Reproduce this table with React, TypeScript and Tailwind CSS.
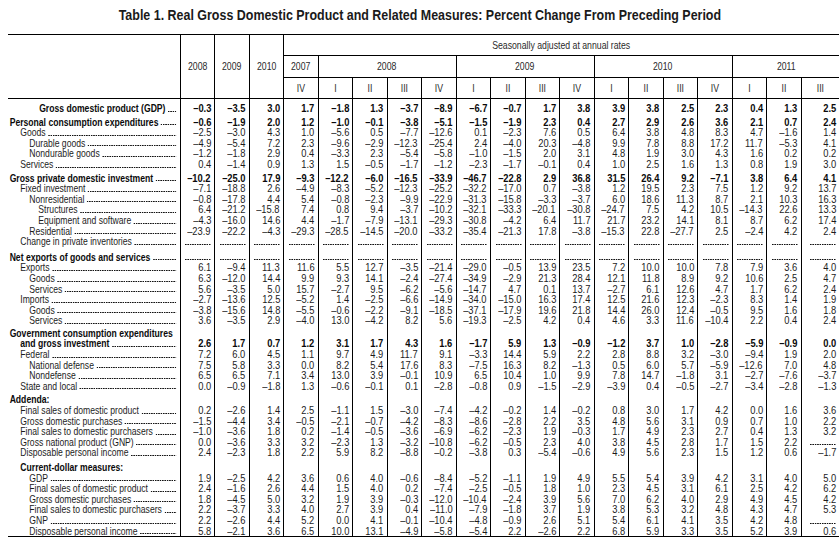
import React from "react";

type Row = { l: string; i: number; b?: boolean; gap?: number; noDots?: boolean; v?: string };

const D = "d d d d d d d d d d d d d d d d d d d";

const rows: Row[] = [
  { l: "Gross domestic product (GDP)", i: 4, b: true, gap: 4, v: "-0.3 -3.5 3.0 1.7 -1.8 1.3 -3.7 -8.9 -6.7 -0.7 1.7 3.8 3.9 3.8 2.5 2.3 0.4 1.3 2.5" },
  { l: "Personal consumption expenditures", i: 0, b: true, gap: 3, v: "-0.6 -1.9 2.0 1.2 -1.0 -0.1 -3.8 -5.1 -1.5 -1.9 2.3 0.4 2.7 2.9 2.6 3.6 2.1 0.7 2.4" },
  { l: "Goods", i: 1, v: "-2.5 -3.0 4.3 1.0 -5.6 0.5 -7.7 -12.6 0.1 -2.3 7.6 0.5 6.4 3.8 4.8 8.3 4.7 -1.6 1.4" },
  { l: "Durable goods", i: 2, v: "-4.9 -5.4 7.2 2.3 -9.6 -2.9 -12.3 -25.4 2.4 -4.0 20.3 -4.8 9.9 7.8 8.8 17.2 11.7 -5.3 4.1" },
  { l: "Nondurable goods", i: 2, v: "-1.2 -1.8 2.9 0.4 -3.3 2.3 -5.4 -5.8 -1.0 -1.5 2.0 3.1 4.8 1.9 3.0 4.3 1.6 0.2 0.2" },
  { l: "Services", i: 1, v: "0.4 -1.4 0.9 1.3 1.5 -0.5 -1.7 -1.2 -2.3 -1.7 -0.1 0.4 1.0 2.5 1.6 1.3 0.8 1.9 3.0" },
  { l: "Gross private domestic investment", i: 0, b: true, gap: 3, v: "-10.2 -25.0 17.9 -9.3 -12.2 -6.0 -16.5 -33.9 -46.7 -22.8 2.9 36.8 31.5 26.4 9.2 -7.1 3.8 6.4 4.1" },
  { l: "Fixed investment", i: 1, v: "-7.1 -18.8 2.6 -4.9 -8.3 -5.2 -12.3 -25.2 -32.2 -17.0 0.7 -3.8 1.2 19.5 2.3 7.5 1.2 9.2 13.7" },
  { l: "Nonresidential", i: 2, v: "-0.8 -17.8 4.4 5.4 -0.8 -2.3 -9.9 -22.9 -31.3 -15.8 -3.3 -3.7 6.0 18.6 11.3 8.7 2.1 10.3 16.3" },
  { l: "Structures", i: 3, v: "6.4 -21.2 -15.8 7.4 0.8 9.4 -3.7 -10.2 -32.1 -33.3 -20.1 -30.8 -24.7 7.5 4.2 10.5 -14.3 22.6 13.3" },
  { l: "Equipment and software", i: 3, v: "-4.3 -16.0 14.6 4.4 -1.7 -7.9 -13.1 -29.3 -30.8 -4.2 6.4 11.7 21.7 23.2 14.1 8.1 8.7 6.2 17.4" },
  { l: "Residential", i: 2, v: "-23.9 -22.2 -4.3 -29.3 -28.5 -14.5 -20.0 -33.2 -35.4 -21.3 17.8 -3.8 -15.3 22.8 -27.7 2.5 -2.4 4.2 2.4" },
  { l: "Change in private inventories", i: 1, v: D },
  { l: "Net exports of goods and services", i: 0, b: true, gap: 5, v: D },
  { l: "Exports", i: 1, v: "6.1 -9.4 11.3 11.6 5.5 12.7 -3.5 -21.4 -29.0 -0.5 13.9 23.5 7.2 10.0 10.0 7.8 7.9 3.6 4.0" },
  { l: "Goods", i: 2, v: "6.3 -12.0 14.4 9.9 9.3 14.1 -2.4 -27.4 -34.9 -2.9 21.3 28.4 12.1 11.8 8.9 9.2 10.6 2.5 4.7" },
  { l: "Services", i: 2, v: "5.6 -3.5 5.0 15.7 -2.7 9.5 -6.2 -5.6 -14.7 4.7 0.1 13.7 -2.7 6.1 12.6 4.7 1.7 6.2 2.4" },
  { l: "Imports", i: 1, v: "-2.7 -13.6 12.5 -5.2 1.4 -2.5 -6.6 -14.9 -34.0 -15.0 16.3 17.4 12.5 21.6 12.3 -2.3 8.3 1.4 1.9" },
  { l: "Goods", i: 2, v: "-3.8 -15.6 14.8 -5.5 -0.6 -2.2 -9.1 -18.5 -37.1 -17.9 19.6 21.8 14.4 26.0 12.4 -0.5 9.5 1.6 1.8" },
  { l: "Services", i: 2, v: "3.6 -3.5 2.9 -4.0 13.0 -4.2 8.2 5.6 -19.3 -2.5 4.2 0.4 4.6 3.3 11.6 -10.4 2.2 0.4 2.4" },
  { l: "Government consumption expenditures", i: 0, b: true, gap: 2, noDots: true },
  { l: "and gross investment", i: 1, b: true, v: "2.6 1.7 0.7 1.2 3.1 1.7 4.3 1.6 -1.7 5.9 1.3 -0.9 -1.2 3.7 1.0 -2.8 -5.9 -0.9 0.0" },
  { l: "Federal", i: 1, v: "7.2 6.0 4.5 1.1 9.7 4.9 11.7 9.1 -3.3 14.4 5.9 2.2 2.8 8.8 3.2 -3.0 -9.4 1.9 2.0" },
  { l: "National defense", i: 2, v: "7.5 5.8 3.3 0.0 8.2 5.4 17.6 8.3 -7.5 16.3 8.2 -1.3 0.5 6.0 5.7 -5.9 -12.6 7.0 4.8" },
  { l: "Nondefense", i: 2, v: "6.5 6.5 7.1 3.4 13.0 3.9 -0.1 10.9 6.5 10.4 1.0 9.9 7.8 14.7 -1.8 3.1 -2.7 -7.6 -3.7" },
  { l: "State and local", i: 1, v: "0.0 -0.9 -1.8 1.3 -0.6 -0.1 0.1 -2.8 -0.8 0.9 -1.5 -2.9 -3.9 0.4 -0.5 -2.7 -3.4 -2.8 -1.3" },
  { l: "Addenda:", i: 0, b: true, gap: 3, noDots: true },
  { l: "Final sales of domestic product", i: 1, v: "0.2 -2.6 1.4 2.5 -1.1 1.5 -3.0 -7.4 -4.2 -0.2 1.4 -0.2 0.8 3.0 1.7 4.2 0.0 1.6 3.6" },
  { l: "Gross domestic purchases", i: 1, v: "-1.5 -4.4 3.4 -0.5 -2.1 -0.7 -4.2 -8.3 -8.6 -2.8 2.2 3.5 4.8 5.6 3.1 0.9 0.7 1.0 2.2" },
  { l: "Final sales to domestic purchasers", i: 1, v: "-1.0 -3.6 1.8 0.2 -1.4 -0.5 -3.6 -6.9 -6.2 -2.3 1.9 -0.3 1.7 4.9 2.3 2.7 0.4 1.3 3.2" },
  { l: "Gross national product (GNP)", i: 1, v: "0.0 -3.6 3.3 3.2 -2.3 1.3 -3.2 -10.8 -6.2 -0.5 2.3 4.0 3.8 4.5 2.8 1.7 1.5 2.2 d" },
  { l: "Disposable personal income", i: 1, v: "2.4 -2.3 1.8 2.2 5.9 8.2 -8.8 -0.2 -3.8 0.3 -5.4 -0.6 4.9 5.6 2.3 1.5 1.2 0.6 -1.7" },
  { l: "Current-dollar measures:", i: 1, b: true, gap: 4, noDots: true },
  { l: "GDP", i: 2, v: "1.9 -2.5 4.2 3.6 0.6 4.0 -0.6 -8.4 -5.2 -1.1 1.9 4.9 5.5 5.4 3.9 4.2 3.1 4.0 5.0" },
  { l: "Final sales of domestic product", i: 2, v: "2.4 -1.6 2.6 4.4 1.5 4.0 0.2 -7.4 -2.5 -0.5 1.8 1.0 2.3 4.5 3.1 6.1 2.5 4.2 6.2" },
  { l: "Gross domestic purchases", i: 2, v: "1.8 -4.5 5.0 3.2 1.9 3.9 -0.3 -12.0 -10.4 -2.4 3.9 5.6 7.0 6.2 4.0 2.9 4.9 4.5 4.2" },
  { l: "Final sales to domestic purchasers", i: 2, v: "2.2 -3.7 3.3 4.0 2.7 3.9 0.4 -11.0 -7.9 -1.8 3.7 1.9 3.8 5.3 3.2 4.8 4.3 4.7 5.3" },
  { l: "GNP", i: 2, v: "2.2 -2.6 4.4 5.2 0.0 4.1 -0.1 -10.4 -4.8 -0.9 2.6 5.1 5.4 6.1 4.1 3.5 4.2 4.8 d" },
  { l: "Disposable personal income", i: 2, v: "5.8 -2.1 3.6 6.5 10.0 13.1 -4.9 -5.8 -5.4 2.2 -2.6 2.2 6.8 5.9 3.3 3.5 5.2 3.9 0.6" },
];

const indent = ["pl-[2px]", "pl-[15px]", "pl-[26px]", "pl-[37px]", "pl-[38px]"];
const gapCls: Record<number, string> = { 0: "", 2: "pt-[2px]", 3: "pt-[3px]", 4: "pt-[4px]", 5: "pt-[5px]" };

const quarters = ["IV", "I", "II", "III", "IV", "I", "II", "III", "IV", "I", "II", "III", "IV", "I", "II", "III"];

function Narrow({ children }: { children: React.ReactNode }) {
  return <span className="inline-block whitespace-nowrap origin-center scale-x-[0.83]">{children}</span>;
}

function Cell({ v, last, bold, gap, bottom }: { v?: string; last: boolean; bold?: boolean; gap: string; bottom: boolean }) {
  return (
    <td
      className={`p-0 pr-[3px] align-bottom text-right ${last ? "" : "border-r border-black"} ${bottom ? "border-b border-black" : ""} ${gap}`}
    >
      {v === "d" ? (
        <div className="ml-auto mb-[2px] h-[1px] w-[26px] bg-[linear-gradient(to_right,#111_1.2px,transparent_1.2px)] bg-[length:2.4px_1px] bg-repeat-x" />
      ) : v ? (
        <span className={`inline-block whitespace-nowrap origin-right scale-x-[0.85] text-[11px] ${bold ? "font-bold text-[#0a0a0a]" : ""}`}>
          {v.replace("-", "\u2013")}
        </span>
      ) : null}
    </td>
  );
}

export default function App() {
  return (
    <div className="w-[839px] h-[549px] overflow-hidden bg-white text-[#1c1c1c] font-['Liberation_Sans','Arial',sans-serif]">
      <div className="h-[34px] pt-[6px] text-center text-[15px] leading-[17px] font-bold text-[#1a1a1a]">
        <span className="inline-block whitespace-nowrap origin-center scale-x-[0.83]">
          Table 1. Real Gross Domestic Product and Related Measures: Percent Change From Preceding Period
        </span>
      </div>
      <table className="ml-2 w-[831px] table-fixed border-collapse text-[10.5px] leading-[10.6px]">
        <colgroup>
          <col className="w-[172px]" />
          {Array.from({ length: 18 }).map((_, k) => (
            <col key={k} className="w-[34.5px]" />
          ))}
          <col className="w-[38px]" />
        </colgroup>
        <thead className="text-[#2a2a2a]">
          <tr className="h-[21px]">
            <th rowSpan={3} className="p-0 border-t border-b border-r border-black"></th>
            {["2008", "2009", "2010"].map((y) => (
              <th key={y} rowSpan={3} className="p-0 border-t border-b border-r border-black font-normal align-middle">
                <Narrow>{y}</Narrow>
              </th>
            ))}
            <th colSpan={16} className="p-0 border-t border-b border-black font-normal align-middle">
              <Narrow>Seasonally adjusted at annual rates</Narrow>
            </th>
          </tr>
          <tr className="h-[22px]">
            <th className="p-0 border-b border-r border-black font-normal">
              <Narrow>2007</Narrow>
            </th>
            <th colSpan={4} className="p-0 border-b border-r border-black font-normal">
              <Narrow>2008</Narrow>
            </th>
            <th colSpan={4} className="p-0 border-b border-r border-black font-normal">
              <Narrow>2009</Narrow>
            </th>
            <th colSpan={4} className="p-0 border-b border-r border-black font-normal">
              <Narrow>2010</Narrow>
            </th>
            <th colSpan={3} className="p-0 border-b border-black font-normal">
              <Narrow>2011</Narrow>
            </th>
          </tr>
          <tr className="h-[21px]">
            {quarters.map((q, k) => (
              <th
                key={k}
                className={`p-0 border-b border-black font-normal ${k === quarters.length - 1 ? "" : "border-r"}`}
              >
                <Narrow>{q}</Narrow>
              </th>
            ))}
          </tr>
        </thead>
        <tbody>
          {rows.map((r, ri) => {
            const gap = gapCls[r.gap ?? 0];
            const bottom = ri === rows.length - 1;
            const vals = r.v ? r.v.split(" ") : Array.from({ length: 19 }).map(() => "");
            return (
              <tr key={ri}>
                <td className={`p-0 align-bottom border-r border-black ${bottom ? "border-b" : ""} ${gap}`}>
                  <div className={`flex w-[210px] origin-left scale-x-[0.82] items-baseline pr-[5px] ${indent[r.i]}`}>
                    <span className={`whitespace-nowrap ${r.b ? "font-bold text-[#0a0a0a]" : ""}`}>{r.l}</span>
                    {!r.noDots && (
                      <span className="ml-[3px] mb-[2px] h-[1px] flex-1 self-end bg-[linear-gradient(to_right,#111_1.5px,transparent_1.5px)] bg-[length:2.9px_1px] bg-repeat-x" />
                    )}
                  </div>
                </td>
                {vals.map((v, k) => (
                  <Cell key={k} v={v} last={k === 18} bold={r.b} gap={gap} bottom={bottom} />
                ))}
              </tr>
            );
          })}
        </tbody>
      </table>
    </div>
  );
}
